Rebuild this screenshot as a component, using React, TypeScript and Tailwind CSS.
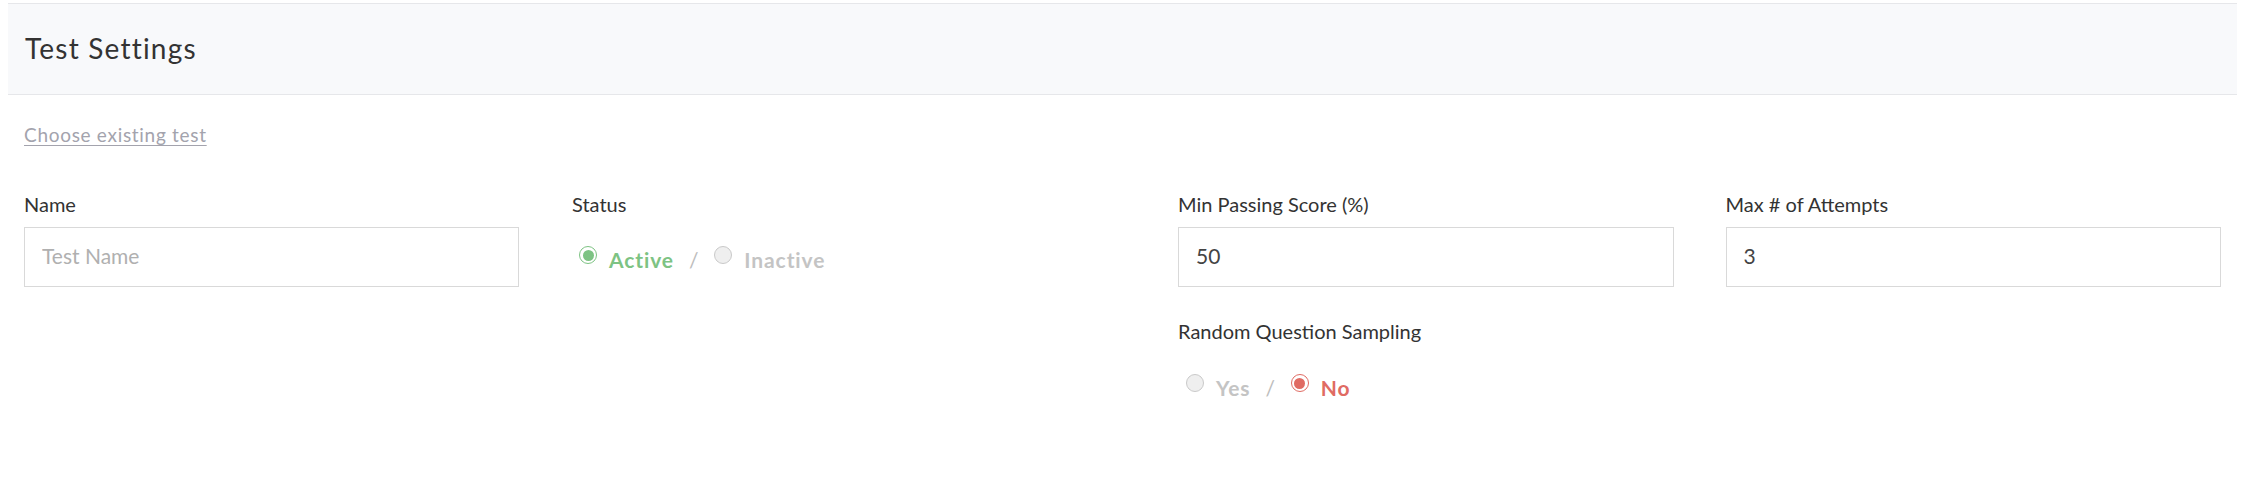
import { useState } from 'react';

type Tone = 'green' | 'red';

const font = { fontFamily: 'Lato, "Open Sans", Arial, sans-serif' };

function Radio({ checked, tone }: { checked: boolean; tone: Tone }) {
  if (!checked) {
    return <span className="mb-[9px] block w-[18px] h-[18px] rounded-full border border-[#c9c9c9] bg-[#efefef]" />;
  }
  return (
    <span
      className={`mb-[9px] flex items-center justify-center w-[18px] h-[18px] rounded-full border bg-white ${
        tone === 'green' ? 'border-[#7dc383]' : 'border-[#e06b63]'
      }`}
    >
      <span className={`block w-[11px] h-[11px] rounded-full ${tone === 'green' ? 'bg-[#7dc383]' : 'bg-[#e06b63]'}`} />
    </span>
  );
}

function Toggle({
  left,
  right,
  value,
  tone,
  onChange,
}: {
  left: string;
  right: string;
  value: 'left' | 'right';
  tone: Tone;
  onChange: (v: 'left' | 'right') => void;
}) {
  const on = tone === 'green' ? 'text-[#7dc383]' : 'text-[#e06b63]';
  return (
    <div className="flex items-center ml-[7px] text-[21px] leading-[24px] font-bold tracking-[0.9px]">
      <button className="flex items-center gap-[12px]" onClick={() => onChange('left')}>
        <Radio checked={value === 'left'} tone={tone} />
        <span className={value === 'left' ? on : 'text-[#c4c4c4]'}>{left}</span>
      </button>
      <span className="mx-[15px] font-normal text-[#bdbdbd]">/</span>
      <button className="flex items-center gap-[12px]" onClick={() => onChange('right')}>
        <Radio checked={value === 'right'} tone={tone} />
        <span className={value === 'right' ? on : 'text-[#c4c4c4]'}>{right}</span>
      </button>
    </div>
  );
}

function Field({ label, value, placeholder }: { label: string; value?: string; placeholder?: string }) {
  return (
    <div>
      <label className="block text-[20px] leading-[24px] text-[#333] mb-[11px]">{label}</label>
      <input
        defaultValue={value}
        placeholder={placeholder}
        className="w-full h-[60px] border border-[#d9d9d9] px-[17px] pb-[3px] text-[21px] text-[#444] placeholder:text-[#b0b0b0] outline-none"
        style={font}
      />
    </div>
  );
}

export default function App() {
  const [active, setActive] = useState<'left' | 'right'>('left');
  const [sampling, setSampling] = useState<'left' | 'right'>('right');

  return (
    <div className="bg-white min-h-[480px] pt-[3px] pl-[8px] pr-[11px]" style={font}>
      {/* Header */}
      <div className="h-[92px] flex items-center px-[17px] bg-[#f8f9fb] border-y border-[#e6e7ea]">
        <h1 className="mb-[3px] text-[28px] leading-none tracking-[1.2px] text-[#333]">Test Settings</h1>
      </div>

      <div className="px-[16px]">
        <a
          href="#"
          className="block mt-[28px] w-max text-[19px] leading-[24px] tracking-[0.7px] text-[#a3a3ad] underline underline-offset-[3px]"
        >
          Choose existing test
        </a>

        <div className="mt-[45px] flex justify-between">
          {/* Left half */}
          <div className="w-[1043px] grid grid-cols-2 gap-x-[53px]">
            <Field label="Name" placeholder="Test Name" />
            <div>
              <div className="text-[20px] leading-[24px] text-[#333]">Status</div>
              <div className="mt-[30px]">
                <Toggle left="Active" right="Inactive" value={active} tone="green" onChange={setActive} />
              </div>
            </div>
          </div>

          {/* Right half */}
          <div className="w-[1043px] grid grid-cols-2 gap-x-[52px]">
            <div>
              <Field label="Min Passing Score (%)" value="50" />
              <div className="mt-[32px] text-[20px] leading-[24px] text-[#333]">Random Question Sampling</div>
              <div className="mt-[31px] ml-[1px]">
                <Toggle left="Yes" right="No" value={sampling} tone="red" onChange={setSampling} />
              </div>
            </div>
            <Field label="Max # of Attempts" value="3" />
          </div>
        </div>
      </div>
    </div>
  );
}
